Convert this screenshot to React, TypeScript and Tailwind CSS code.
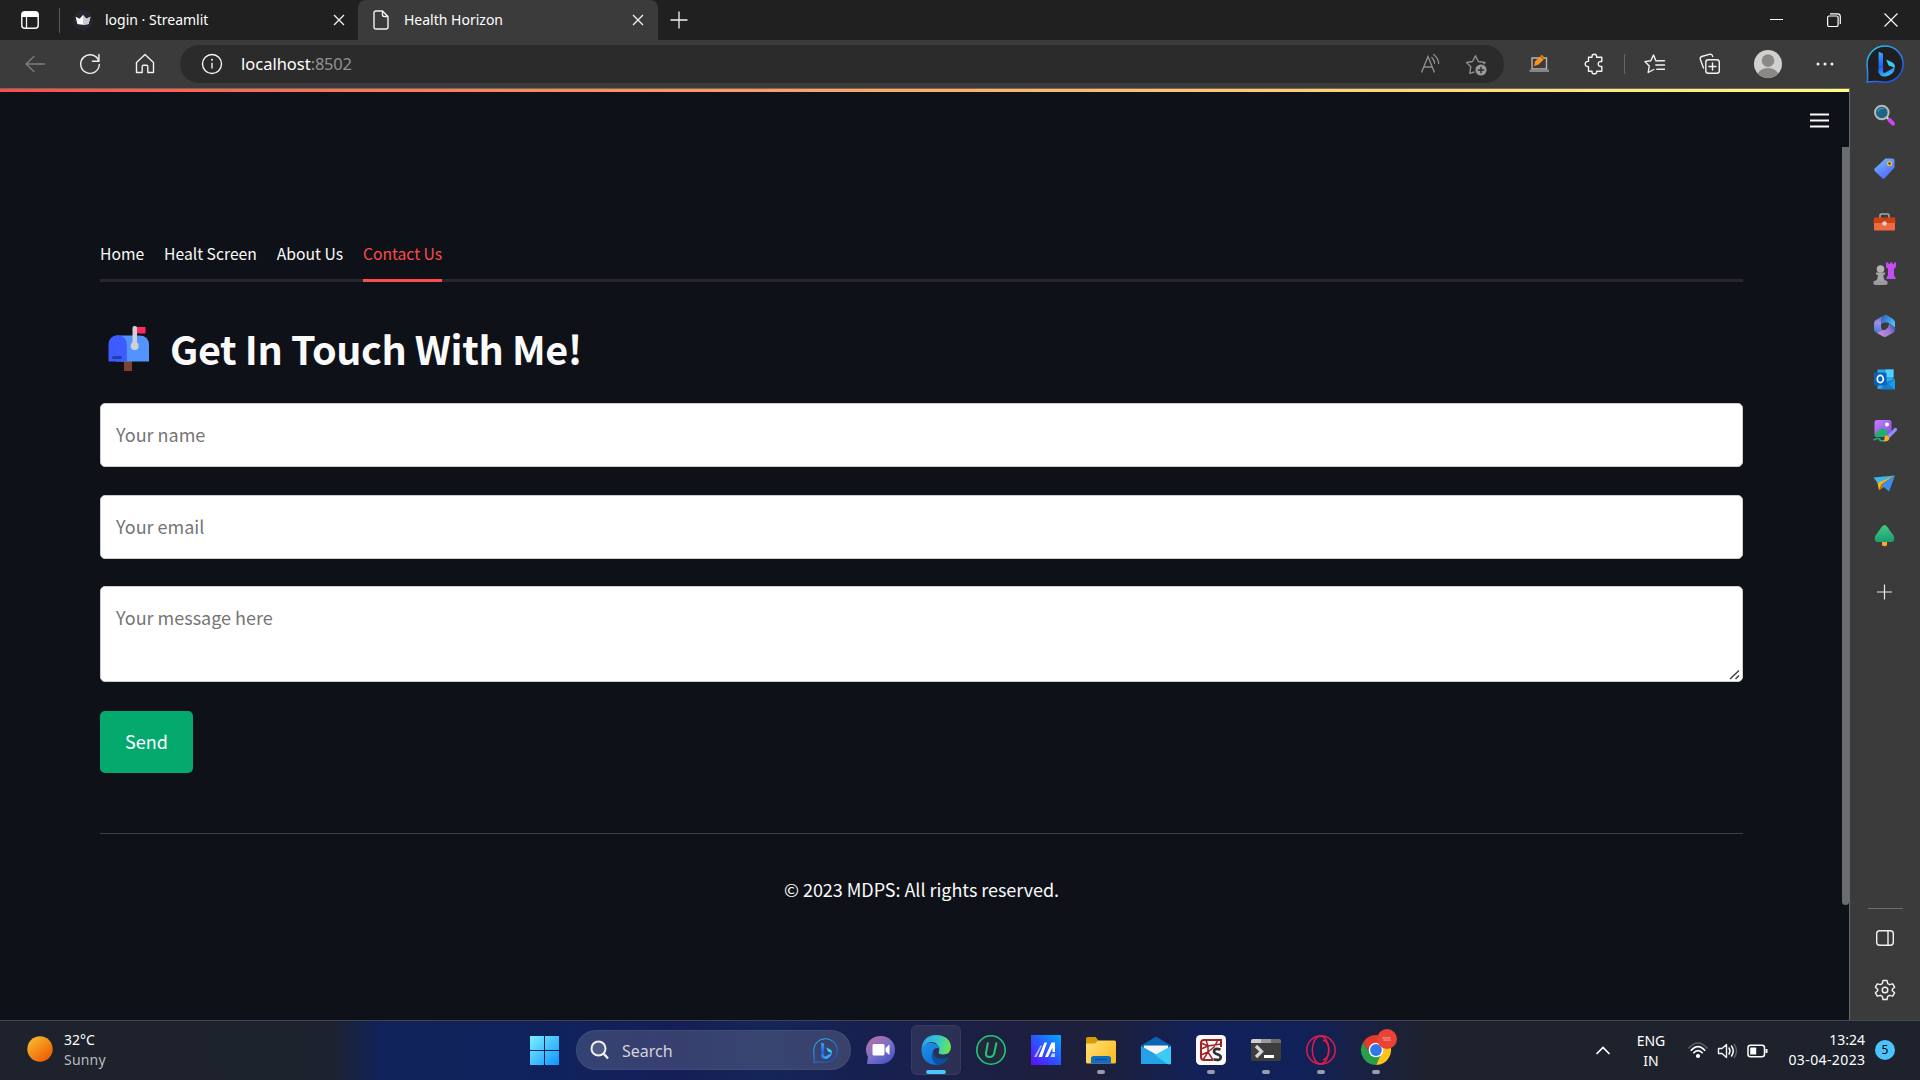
import React from "react";

type SvgProps = { w: number; h: number; className?: string; children: React.ReactNode };

/** Drawing surface whose units are page pixels. */
function Svg({ w, h, className = "", children }: SvgProps) {
  return (
    <svg width={w} height={h} viewBox={`0 0 ${w} ${h}`} fill="none" className={`block shrink-0 ${className}`}>
      {children}
    </svg>
  );
}

const line = { stroke: "#f2f2f2", strokeWidth: 1.4, strokeLinecap: "round", strokeLinejoin: "round" } as const;

function BingMark({ size, fill, id }: { size: number; fill: string; id: string }) {
  return (
    <svg width={size} height={size} viewBox="0 0 38 38" fill="none" className="block shrink-0">
      <defs>
        <linearGradient id={`${id}r`} x1="6" y1="2" x2="30" y2="36" gradientUnits="userSpaceOnUse">
          <stop stopColor="#27c4f0" />
          <stop offset="0.5" stopColor="#2a84f5" />
          <stop offset="1" stopColor="#1c50d8" />
        </linearGradient>
        <linearGradient id={`${id}b`} x1="12" y1="8" x2="22" y2="32" gradientUnits="userSpaceOnUse">
          <stop stopColor="#39a7ff" />
          <stop offset="0.55" stopColor="#1f5df2" />
          <stop offset="1" stopColor="#35c9ff" />
        </linearGradient>
      </defs>
      <path d="M19 1A18 18 0 1 1 19 37.2C14 37.2 11 35.6 1.2 37C1.8 34 2 30 1 19A18 18 0 0 1 19 1Z" fill={fill} stroke={`url(#${id}r)`} strokeWidth="1.5" />
      <path d="M12.6 6.8L17 8.6V23.6L12.6 27Z" fill={`url(#${id}b)`} />
      <path d="M12.6 25.5L18.6 28L28.4 22.2C29 26.5 26 29 22.6 30.6C19 32.6 12.6 32 12.6 25.5Z" fill={`url(#${id}b)`} />
      <path d="M12.6 24.5L17 23V28.500L12.6 28Z" fill={`url(#${id}b)`} />
      <path d="M20.2 14.6L26.6 17.6C28.6 18.8 29.4 21.4 28.6 23.2C27.4 22 25.4 21.6 23 20.8C22 20.2 21.2 17.2 20.2 14.6Z" fill="#36c8f6" />
    </svg>
  );
}

function CloseX() {
  return (
    <Svg w={12} h={12}>
      <path d="M1 1L11 11M11 1L1 11" stroke="#f2f2f2" strokeWidth="1.3" />
    </Svg>
  );
}

function TabStrip() {
  return (
    <header className="flex h-10 shrink-0 items-center bg-[#202020]">
      <div className="ml-[21px] flex w-[38px] items-center">
        <Svg w={18} h={18}>
          <rect x="0.8" y="0.8" width="16.4" height="16.4" rx="3" stroke="#f5f5f5" strokeWidth="1.5" />
          <path d="M1 3.5Q1 1 3.5 1H14.500Q17 1 17 3.500V6H1Z" fill="#fff" />
          <path d="M5.500 6V17" stroke="#f5f5f5" strokeWidth="1.3" />
        </Svg>
      </div>
      <div className="h-[25px] w-px bg-[#5a5a5a]" />
      <div className="flex w-[298px] items-center pl-[13px]">
        <Svg w={20} h={20}>
          <circle cx="10" cy="10" r="10" fill="#262730" />
          <path d="M2.600 6.800L6.600 8.800L10 5L13.400 8.800L17.400 6.800L15.600 14Q10 15.400 4.400 14Z" fill="#fff" />
          <path d="M10 5L13.400 8.800L17.400 6.800L15.600 14Q13 14.800 10 14.900Z" fill="#c9c9cf" />
        </Svg>
        <span className="ml-3 w-[228px] whitespace-nowrap text-[14px] leading-5 text-white">login · Streamlit</span>
        <CloseX />
      </div>
      <div className="flex h-10 w-[300px] items-center rounded-t-lg bg-[#3b3b3b] pl-[15px]">
        <Svg w={16} h={20}>
          <path d="M3 1H9.500L15 6.500V17Q15 19 13 19H3Q1 19 1 17V3Q1 1 3 1ZM9.500 1V5Q9.500 6.500 11 6.500H15" {...line} />
        </Svg>
        <span className="ml-[15px] w-[228px] whitespace-nowrap text-[14px] leading-5 text-white">Health Horizon</span>
        <CloseX />
      </div>
      <Svg w={18} h={18} className="ml-3">
        <path d="M9 0.500V17.500M0.500 9H17.500" stroke="#f2f2f2" strokeWidth="1.3" />
      </Svg>
      <div className="ml-auto mr-[22px] flex items-center">
        <Svg w={14} h={14} className="mr-[43px]">
          <path d="M0 6.500H13" stroke="#fff" strokeWidth="1" />
        </Svg>
        <Svg w={14} h={14} className="mr-[43px]">
          <rect x="0.600" y="3" width="10.500" height="10.500" rx="1.500" stroke="#fff" strokeWidth="1.200" />
          <path d="M3 0.800H10.500Q13.300 0.800 13.300 3.600V11" stroke="#fff" strokeWidth="1.200" />
        </Svg>
        <Svg w={14} h={14}>
          <path d="M0.500 0.500L13.500 13.500M13.500 0.500L0.500 13.500" stroke="#fff" strokeWidth="1.100" />
        </Svg>
      </div>
    </header>
  );
}

function Toolbar() {
  return (
    <div className="flex h-12 shrink-0 items-center bg-[#3b3b3b]">
      <Svg w={21} h={18} className="ml-[25px]">
        <path d="M20 9H1M9.500 1L1 9L9.500 17" stroke="#7d7d7d" strokeWidth="1.400" strokeLinejoin="round" />
      </Svg>
      <Svg w={22} h={22} className="ml-[33px]">
        <path d="M19.800 8A9.300 9.300 0 1 0 20.300 11.500" {...line} />
        <path d="M19.900 1.500V8.200H13.400" {...line} />
      </Svg>
      <Svg w={20} h={22} className="ml-[34px]">
        <path d="M1.500 9.500L10 1.500L18.500 9.500V19.500H12.800V13.500Q12.800 12.300 11.600 12.300H8.400Q7.200 12.300 7.200 13.500V19.500H1.500Z" {...line} />
      </Svg>
      <div className="ml-[25px] flex h-[38px] w-[1324px] items-center rounded-full bg-[#2b2b2b] pl-[21px]">
        <Svg w={22} h={22}>
          <circle cx="11" cy="11" r="9.500" {...line} />
          <path d="M11 9.800V15.500" stroke="#f2f2f2" strokeWidth="1.400" />
          <circle cx="11" cy="6.800" r="1" fill="#f2f2f2" />
        </Svg>
        <span className="ml-[18px] whitespace-nowrap text-[16.500px] leading-6 text-white">
          localhost<span className="tracking-[-0.25px] text-[#929292]">:8502</span>
        </span>
        <Svg w={22} h={22} className="ml-auto mr-[23px]">
          <path d="M1.500 19.500L8 3.500L14.500 19.500M4 14H12" stroke="#8e8e8e" strokeWidth="1.400" />
          <path d="M11.800 4.500Q14.500 6.800 14.600 10.300M13.500 1.500Q18.300 4.800 18.700 10.500" stroke="#8e8e8e" strokeWidth="1.300" strokeLinecap="round" />
        </Svg>
        <Svg w={23} h={23} className="mr-4">
          <path d="M9.500 19L4.800 20.300L5.800 13.700L1.500 9.500L7.500 8.500L10.500 2.800L13.300 8.500L20 9.500L18.500 11.300" stroke="#8e8e8e" strokeWidth="1.400" strokeLinejoin="round" />
          <circle cx="16" cy="17" r="5.600" fill="#9a9a9a" />
          <path d="M16 13.800V20.200M12.800 17H19.200" stroke="#2b2b2b" strokeWidth="1.400" />
        </Svg>
      </div>
      <Svg w={21} h={20} className="ml-[25px]">
        <path d="M3 4H17.500V15H3Z" stroke="#b5b5b5" strokeWidth="1.400" />
        <path d="M0.500 15.500H20V18H0.500Z" fill="#858585" />
        <path d="M5 12L6.200 7.200L12.800 0.800L16 4.200L9.300 10.700Z" fill="#f7931e" />
        <path d="M11.500 2L14.800 5.400" stroke="#3b3b3b" strokeWidth="0.800" />
      </Svg>
      <Svg w={22} h={22} className="ml-[34px]">
        <path d="M4.500 4.300H8Q7.700 1.200 10.300 1.200Q12.900 1.200 12.600 4.300H17.800V8.600Q14.200 8.200 14.200 11Q14.200 13.800 17.800 13.400V18.300H12.600Q12.900 20.800 10.300 20.800Q7.700 20.800 8 18.300H4.500V13.600Q1.200 13.800 1.200 11Q1.200 8.200 4.500 8.400Z" {...line} />
      </Svg>
      <div className="ml-[18px] h-5 w-px bg-[#666]" />
      <Svg w={22} h={22} className="ml-[19px]">
        <path d="M12.500 8H12L9.500 2L6.800 7.800L0.900 8.600L5.300 12.900L4.200 19.500L9.800 16.500M13.500 7.800H20.500M11.800 12H20.500M12.800 16.200H20.500" {...line} />
      </Svg>
      <Svg w={22} h={22} className="ml-[33px]">
        <rect x="6.800" y="6.800" width="13.500" height="13.500" rx="2.500" {...line} />
        <path d="M13.500 10V17M10 13.500H17" {...line} />
        <path d="M4.500 15L1.300 6.200Q0.800 4.300 2.700 3.500L11 1.200Q13 0.800 13.800 3.500" {...line} />
      </Svg>
      <Svg w={28} h={28} className="ml-[33px]">
        <defs>
          <clipPath id="avatar"><circle cx="14" cy="14" r="14" /></clipPath>
        </defs>
        <g clipPath="url(#avatar)">
          <rect width="28" height="28" fill="#d2d0ce" />
          <circle cx="14" cy="10.600" r="6.300" fill="#8a8886" />
          <ellipse cx="14" cy="25.500" rx="10.500" ry="7.500" fill="#8a8886" />
        </g>
      </Svg>
      <Svg w={18} h={4} className="ml-[34px]">
        <circle cx="2" cy="2" r="1.500" fill="#f2f2f2" />
        <circle cx="9" cy="2" r="1.500" fill="#f2f2f2" />
        <circle cx="16" cy="2" r="1.500" fill="#f2f2f2" />
      </Svg>
      <div className="ml-auto mr-4">
        <BingMark size={38} fill="#1f1f22" id="top" />
      </div>
    </div>
  );
}

function Mailbox() {
  return (
    <Svg w={42} h={46}>
      <path d="M16 35H24V45H16Z" fill="#7b4330" />
      <path d="M8 9.500H31Q41 9.500 41 19V35.500H8Z" fill="#5393ff" />
      <path d="M0.500 19Q0.500 9.500 9.500 9.500Q18.800 9.500 18.800 19V35.500H0.500Z" fill="#3d5bff" />
      <rect x="4" y="30" width="10" height="3" rx="1.500" fill="#1e3fb0" />
      <path d="M28 1H37.500V7.500H28Z" fill="#ff2a5b" />
      <rect x="24.500" y="0" width="4.500" height="20" rx="2" fill="#d0d1d6" />
      <circle cx="26.700" cy="20" r="4" fill="#d0d1d6" />
    </Svg>
  );
}

function ContactPage() {
  return (
    <main className="flex min-w-0 flex-1 flex-col border-r border-t border-[#6a6a6a] bg-[#0e1117] font-['Noto_Sans_CJK_SC','Noto_Sans',sans-serif] text-[#fafafa]">
      <div className="h-[3px] bg-linear-to-r from-[#ff4b4b] to-[#fffd80]" />
      <div className="flex min-h-0 flex-1">
        <div className="flex min-w-0 flex-1 flex-col pl-[100px]">
          <nav className="mt-[145px] flex h-[45px] w-[1643px] gap-[19.900px] border-b-[3px] border-[#27282d] text-[15.700px] leading-[34px]">
            <span className="h-[45px] whitespace-nowrap">Home</span>
            <span className="h-[45px] whitespace-nowrap">Healt Screen</span>
            <span className="h-[45px] whitespace-nowrap">About Us</span>
            <span className="h-[45px] whitespace-nowrap border-b-[3px] border-[#ff4b4b] text-[#ff4b4b]">Contact Us</span>
          </nav>
          <div className="mt-[41px] flex h-[54px] items-center pl-2">
            <div className="mt-[-3px]"><Mailbox /></div>
            <h1 className="ml-[20px] mt-[-5px] whitespace-nowrap text-[39.500px] font-bold leading-[54px] tracking-[-0.4px]">Get In Touch With Me!</h1>
          </div>
          <form className="mt-[26px] flex w-[1643px] flex-col text-[18px] leading-[30px] text-[#757575]">
            <div className="h-16 rounded-[5px] border border-[#ccc] bg-white px-[15px] pt-[15px]">Your name</div>
            <div className="mt-7 h-16 rounded-[5px] border border-[#ccc] bg-white px-[15px] pt-[15px]">Your email</div>
            <div className="mt-[27px] flex h-24 justify-between rounded-[5px] border border-[#ccc] bg-white pl-[15px] pt-[15px]">
              <span>Your message here</span>
              <Svg w={14} h={12} className="mr-px mt-auto">
                <path d="M3 10L12 1.500M8.500 10L12 6.500" stroke="#444" strokeWidth="1.500" />
              </Svg>
            </div>
          </form>
          <button className="mt-[29px] h-[62px] w-[93px] rounded-[5px] bg-[#04aa6d] pb-[2px] text-[18px] text-white">Send</button>
          <div className="mt-[60px] h-px w-[1643px] bg-[#3c3e43]" />
          <p className="mt-[40px] w-[1643px] text-center text-[18px] leading-[30px] tracking-[-0.04px]">© 2023 MDPS: All rights reserved.</p>
        </div>
        <div className="flex w-[39px] flex-col">
          <Svg w={20} h={15} className="mt-[21px]">
            <path d="M0 1.500H19M0 7.500H19M0 13.500H19" stroke="#fafafa" strokeWidth="2" />
          </Svg>
          <div className="ml-8 mt-[19px] h-[758px] w-[7px] rounded-b-full bg-[#6b6c70]" />
        </div>
      </div>
    </main>
  );
}

function SideRail() {
  return (
    <aside className="flex w-[70px] shrink-0 flex-col items-center bg-[#3b3b3b]">
      <Svg w={24} h={24} className="mt-4">
        <circle cx="8.800" cy="8.500" r="6.800" fill="#1d6486" stroke="#b9b9b9" strokeWidth="2" />
        <path d="M5 7.500A4.500 4.500 0 0 1 11 4.800" stroke="#3b96bd" strokeWidth="1.200" />
        <path d="M14 13.500L16 15.500" stroke="#ddd" strokeWidth="2" />
        <path d="M16.500 16L20 19.600" stroke="#cc44f4" strokeWidth="4" strokeLinecap="round" />
      </Svg>
      <Svg w={24} h={24} className="mt-[29px]">
        <defs>
          <linearGradient id="tag" x1="6" y1="3" x2="16" y2="20" gradientUnits="userSpaceOnUse">
            <stop stopColor="#6fb2ff" /><stop offset="1" stopColor="#5468ff" />
          </linearGradient>
        </defs>
        <path d="M12.500 1.500H19.500Q21.500 1.500 21.500 3.500V10.500L12 21Q10.500 22.500 9 21L1.700 14Q0.500 12.500 2 11.200Z" fill="url(#tag)" />
        <circle cx="16.500" cy="6.500" r="1.900" fill="#433" stroke="#f5c518" strokeWidth="1.400" />
      </Svg>
      <Svg w={24} h={24} className="mt-[29px]">
        <path d="M7 8V5.500Q7 4 8.500 4H14.500Q16 4 16 5.500V8" stroke="#a8a8a8" strokeWidth="1.600" />
        <rect x="1" y="11" width="21" height="9.500" rx="1" fill="#ee6a40" />
        <path d="M1 7.500H22L22.500 13H0.500Z" fill="#cf4013" />
        <circle cx="11.500" cy="13.500" r="2.300" fill="#d3d3d3" />
      </Svg>
      <Svg w={24} h={24} className="mt-[28px]">
        <circle cx="7.500" cy="7" r="3.800" fill="#b3b3b3" />
        <path d="M3 10.500H12V12.800H10.200Q10.200 17 13 19.500H2.500Q5 17 5 12.800H3Z" fill="#a6a6a6" />
        <rect x="0.500" y="18.500" width="14" height="4.500" rx="1.800" fill="#9b9b9b" />
        <path d="M13 0.500H15.500V2H17V0.500H19.500V2H21V0.500H23V5L21 7V13L23 17H13L15 13V7L13 5Z" fill="#c34df5" />
      </Svg>
      <Svg w={24} h={24} className="mt-[28px]">
        <defs>
          <linearGradient id="m1" x1="10" y1="1" x2="3" y2="18" gradientUnits="userSpaceOnUse">
            <stop stopColor="#4e6fd0" /><stop offset="0.500" stopColor="#a78be6" /><stop offset="1" stopColor="#3f7fdc" />
          </linearGradient>
          <linearGradient id="m2" x1="8" y1="3" x2="22" y2="13" gradientUnits="userSpaceOnUse">
            <stop stopColor="#2f62c8" /><stop offset="1" stopColor="#4fd0f8" />
          </linearGradient>
          <linearGradient id="m3" x1="6" y1="20" x2="22" y2="12" gradientUnits="userSpaceOnUse">
            <stop stopColor="#c58be0" /><stop offset="0.600" stopColor="#9a78d0" /><stop offset="1" stopColor="#3d4fb0" />
          </linearGradient>
        </defs>
        <path d="M11.500 1L3 6Q1 7.200 1 9.500V15.500Q1 17.500 3 18.500L4.500 19L9.500 16Q8 15 8 13V8Q8 3 11.500 1Z" fill="url(#m1)" />
        <path d="M11.500 1Q13 0.500 14.500 1.500L20 5Q22 6.500 22 8.500V13.500L15.500 9Q12.500 7 8 10V8Q8 3 11.500 1Z" fill="url(#m2)" />
        <path d="M16 9.500L22 13.500V15.500Q22 17.500 20.500 18.500L14 22.300Q11.500 23.500 9.500 22.300L4 19L9.500 16H12Q15.500 14.500 16 9.500Z" fill="url(#m3)" />
      </Svg>
      <Svg w={24} h={24} className="mt-[30px]">
        <path d="M4.500 1.500H20.500V21H4.500Z" fill="#2aa8ea" />
        <path d="M12.500 1.500H20.500V9H12.500Z" fill="#50d0ff" />
        <path d="M13 14L22 11V21.500H7.500Z" fill="#127fce" />
        <path d="M15.500 16L22 11V21.500Z" fill="#1a9be8" />
        <rect x="1" y="4.500" width="12.500" height="13" rx="1.500" fill="#0a63bb" />
        <ellipse cx="7.300" cy="11" rx="3" ry="3.600" stroke="#fff" strokeWidth="1.700" />
      </Svg>
      <Svg w={26} h={26} className="mt-[26px]">
        <defs>
          <linearGradient id="pic" x1="4" y1="3" x2="16" y2="18" gradientUnits="userSpaceOnUse">
            <stop stopColor="#c07cf8" /><stop offset="1" stopColor="#8c4fe0" />
          </linearGradient>
        </defs>
        <rect x="2.500" y="2" width="17" height="17" rx="2.500" fill="url(#pic)" />
        <circle cx="15" cy="6.500" r="2" fill="#fff" />
        <path d="M3 16L9 10.500Q10.500 9.500 12 10.500L16.500 14L12.500 19H4.500Q3 18 3 16Z" fill="#1fae6c" />
        <path d="M1.500 22Q6 19.500 8 21Q7 23.500 12 22.500" stroke="#22b573" strokeWidth="1.500" />
        <path d="M23.500 11.500L17 18" stroke="#8f8dfc" strokeWidth="3.200" strokeLinecap="round" />
        <path d="M14.500 17L17.500 20Q17 24 11 23.500Q13 21.500 12.500 19.500Q12.800 17.500 14.500 17Z" fill="#fcae26" />
      </Svg>
      <Svg w={24} h={24} className="mt-[27px]">
        <path d="M0.500 6.500L22 4.500L5 12.500Z" fill="#38b6f0" />
        <path d="M4.500 12L22 4.500L8.500 13.500L6 19.500Z" fill="#f9b416" />
        <path d="M6 19.500L9 13L11.500 15.500Z" fill="#c97a06" />
        <path d="M22 4.500L16 20.500L8.500 14Z" fill="#3b8ff2" />
      </Svg>
      <Svg w={24} h={24} className="mt-[29px]">
        <defs>
          <linearGradient id="tree" x1="12" y1="1" x2="14" y2="18" gradientUnits="userSpaceOnUse">
            <stop stopColor="#3fcb7c" /><stop offset="1" stopColor="#1c9a76" />
          </linearGradient>
        </defs>
        <path d="M9 16H14V21.500Q11.500 23 9 21.500Z" fill="#f7a922" />
        <path d="M9 2.500Q11.500 -0.500 14 2.500L20.500 11.500Q23 18 17.500 18H5.500Q0 18 2.500 11.500Z" fill="url(#tree)" />
      </Svg>
      <Svg w={16} h={16} className="mt-[36px]">
        <path d="M7.500 0.500V15.500M0 8H15" stroke="#e8e8e8" strokeWidth="1.200" />
      </Svg>
      <div className="mt-[308px] h-px w-[35px] bg-[#6e6e6e]" />
      <Svg w={20} h={18} className="mt-[20px]">
        <rect x="1.700" y="1.700" width="16.600" height="14.600" rx="3" {...line} />
        <path d="M13 2V16" {...line} />
      </Svg>
      <Svg w={22} h={22} className="mt-[32px]">
        <path d="M9 1.500H13L13.700 4.600L15.600 5.700L18.700 4.800L20.600 8.200L18.300 10.300V11.700L20.600 13.800L18.700 17.200L15.600 16.300L13.700 17.400L13 20.500H9L8.300 17.400L6.400 16.300L3.300 17.200L1.400 13.800L3.700 11.700V10.300L1.400 8.200L3.300 4.800L6.400 5.700L8.300 4.600Z" {...line} />
        <circle cx="11" cy="11" r="2.800" {...line} />
      </Svg>
    </aside>
  );
}

function TaskIcon({ children, dot }: { children: React.ReactNode; dot?: boolean }) {
  return (
    <div className="flex h-[50px] w-[55px] flex-col items-center pt-[10px]">
      {children}
      {dot && <div className="mt-[5px] h-1 w-2 rounded-full bg-[#9a9ca8]" />}
    </div>
  );
}

function Taskbar() {
  return (
    <footer className="flex h-[60px] shrink-0 items-center border-t border-[#44464f] bg-[linear-gradient(90deg,#1e222c_0,#1c222d_330px,#10235a_380px,#10225c_560px,#151e56_680px,#152558_760px,#17204f_880px,#1c1f40_1000px,#1d1f3b_1100px,#122158_1200px,#10215a_1300px,#1a2140_1370px,#1e222c_1430px,#1e222c_100%)] font-['Noto_Sans','Open_Sans',sans-serif]">
      <Svg w={26} h={26} className="ml-[27px] mt-[-3px]">
        <defs>
          <linearGradient id="sun" x1="5" y1="3" x2="21" y2="23" gradientUnits="userSpaceOnUse">
            <stop stopColor="#f7b32b" /><stop offset="1" stopColor="#ee5f04" />
          </linearGradient>
        </defs>
        <circle cx="13" cy="13" r="12.700" fill="url(#sun)" />
      </Svg>
      <div className="ml-[11px] mt-[-1px] w-[466px] text-[14px] leading-5">
        <div className="text-white">32°C</div>
        <div className="tracking-[0.2px] text-[#b9bbc2]">Sunny</div>
      </div>
      <Svg w={29} h={29}>
        <defs>
          <linearGradient id="win" x1="0" y1="0" x2="29" y2="29" gradientUnits="userSpaceOnUse">
            <stop stopColor="#7cf0ff" /><stop offset="1" stopColor="#0e94fb" />
          </linearGradient>
        </defs>
        <path d="M0 0H14V14H0ZM15 0H29V14H15ZM0 15H14V29H0ZM15 15H29V29H15Z" fill="url(#win)" />
      </Svg>
      <div className="mb-px ml-[17px] flex h-10 w-[275px] items-center rounded-full border border-white/5 bg-white/15 pl-[13px] pr-3">
        <Svg w={20} h={20}>
          <circle cx="8.500" cy="8.500" r="7" stroke="#f0f0f3" strokeWidth="2" fill="#ffffff22" />
          <path d="M13.500 13.500L18 18.500" stroke="#f0f0f3" strokeWidth="2.400" />
        </Svg>
        <span className="ml-[12px] mt-px text-[16px] text-[#d3d4dc]">Search</span>
        <div className="ml-auto"><BingMark size={25} fill="none" id="tb" /></div>
      </div>
      <div className="mb-[2px] ml-[2px] flex h-[50px]">
        <TaskIcon>
          <Svg w={30} h={30}>
            <defs>
              <linearGradient id="chat" x1="5" y1="5" x2="22" y2="28" gradientUnits="userSpaceOnUse">
                <stop stopColor="#a970a8" /><stop offset="0.500" stopColor="#7b6fc8" /><stop offset="1" stopColor="#4b54c4" />
              </linearGradient>
            </defs>
            <path d="M15 1A14 14 0 1 1 15 29H1L2 22A14 14 0 0 1 15 1Z" fill="url(#chat)" />
            <rect x="6.500" y="9" width="12" height="11.500" rx="1.500" fill="#fff" />
            <path d="M19.500 13L23.500 9.500V20L19.500 16.500Z" fill="#fff" />
          </Svg>
        </TaskIcon>
        <div className="mx-[2.500px] flex h-[50px] w-[50px] flex-col items-center rounded-md border border-white/5 bg-white/8 pt-[9px]">
          <Svg w={30} h={30}>
            <defs>
              <linearGradient id="ed1" x1="2" y1="8" x2="29" y2="14" gradientUnits="userSpaceOnUse">
                <stop stopColor="#2aa9e8" /><stop offset="0.500" stopColor="#35c7cf" /><stop offset="1" stopColor="#6be84a" />
              </linearGradient>
              <linearGradient id="ed2" x1="2" y1="10" x2="16" y2="30" gradientUnits="userSpaceOnUse">
                <stop stopColor="#1f8fe4" /><stop offset="1" stopColor="#0c6fd0" />
              </linearGradient>
            </defs>
            <path d="M0.500 14Q2 0 15 0Q29 0.500 30 12Q29.500 19.500 22 19.500Q16.500 19.500 18 16.500Q19.500 12 14.500 8Q7 4.500 0.500 14Z" fill="url(#ed1)" />
            <path d="M0.300 14.500Q4 6.500 12 8Q18.500 10 19 14Q14 11 12 16Q12 24 21 25Q25 25 27.500 22.500Q23 30 15 30Q1 29 0.300 14.500Z" fill="url(#ed2)" />
            <path d="M12 16Q8 23 15.500 29.800Q24 29.500 27.500 22.500Q13 27 12 16Z" fill="#0b4f9f" />
          </Svg>
          <div className="mt-[5px] h-1 w-5 rounded-full bg-[#4cc2ff]" />
        </div>
        <TaskIcon>
          <Svg w={30} h={30}>
            <circle cx="15" cy="15" r="14.200" stroke="#23c77c" strokeWidth="1.600" fill="#23283a" />
            <path d="M12 7.500L10 18Q9.500 22 13.500 22Q17.500 22 18.300 18L20.500 7.500" stroke="#23c77c" strokeWidth="2" />
          </Svg>
        </TaskIcon>
        <TaskIcon>
          <Svg w={30} h={30}>
            <defs>
              <linearGradient id="ma" x1="2" y1="28" x2="28" y2="2" gradientUnits="userSpaceOnUse">
                <stop stopColor="#5a12ff" /><stop offset="0.500" stopColor="#2b55ff" /><stop offset="1" stopColor="#08a0ff" />
              </linearGradient>
            </defs>
            <rect width="30" height="30" fill="url(#ma)" />
            <path d="M3 22L9.500 10.500H11L5.500 22Z" fill="#a9bcff" />
            <path d="M7.500 22L13.500 7.500H16L11 22Z" fill="#fff" />
            <path d="M14 22L20.500 7.500H24V17H21.500V12.500L17 22Z" fill="#fff" />
            <path d="M21 18.500H24V22H19.500Z" fill="#c5d3ff" />
          </Svg>
        </TaskIcon>
        <TaskIcon dot>
          <Svg w={30} h={30}>
            <defs>
              <linearGradient id="fold" x1="2" y1="6" x2="28" y2="28" gradientUnits="userSpaceOnUse">
                <stop stopColor="#ffdf76" /><stop offset="1" stopColor="#fcbc1c" />
              </linearGradient>
            </defs>
            <path d="M0 4Q0 2 2 2H9.500L12.500 5.500V10H0Z" fill="#d99a08" />
            <path d="M0 8.500H9L12.500 5.500H28.500Q30 5.500 30 7V27Q30 28.500 28.500 28.500H1.500Q0 28.500 0 27Z" fill="url(#fold)" />
            <path d="M5 28.500V23.500Q5 21 7.500 21H22.500Q25 21 25 23.500V28.500Z" fill="#0f6fc4" />
            <path d="M9 24.500H21" stroke="#0a4f96" strokeWidth="1.400" />
          </Svg>
        </TaskIcon>
        <TaskIcon>
          <Svg w={30} h={30}>
            <path d="M15 1.500L30 10.500V14H0V10.500Z" fill="#0b63b4" />
            <path d="M3 10.500H27V17L15 24L3 17Z" fill="#f2f4f8" />
            <path d="M0 11L15 19.500L30 29H0Z" fill="#28a8ea" />
            <path d="M30 11V29.200H27L13 20.500Z" fill="#3ccbf7" />
            <path d="M0 11L15 19.500L25 29H0Z" fill="#2398e2" opacity="0.500" />
          </Svg>
        </TaskIcon>
        <TaskIcon dot>
          <Svg w={30} h={30}>
            <rect width="30" height="30" rx="4.500" fill="#fafafa" />
            <path d="M17 25H8Q5 25 5 22V8Q5 5 8 5H25V12" stroke="#a42226" strokeWidth="2" />
            <path d="M5 14L12 11L25 9M5 20L12 17L17 25M10 5L12 11V17L18 12L22 5M12 17L7 25M5 8L12 11" stroke="#a42226" strokeWidth="1.500" />
            <path d="M24.500 14.500Q18 12.800 18 16.300Q18 18.300 21.200 19.200Q24.800 20.200 24.800 22.500Q24.500 26 17.500 24.300" stroke="#2d2f33" strokeWidth="2.700" />
          </Svg>
        </TaskIcon>
        <TaskIcon dot>
          <Svg w={30} h={30}>
            <rect y="4" width="30" height="22" rx="2" fill="#3d3d3d" />
            <path d="M0 8V6Q0 4 2 4H10V8Z" fill="#cfcfcf" />
            <path d="M10 4H20V8H10Z" fill="#9b9b9b" />
            <path d="M20 4H28Q30 4 30 6V8H20Z" fill="#6d6d6d" />
            <path d="M5 11L10.500 16.500L5 22" stroke="#d4d4d4" strokeWidth="3.200" />
            <rect x="13" y="20" width="10" height="3" fill="#fff" />
          </Svg>
        </TaskIcon>
        <TaskIcon dot>
          <Svg w={30} h={30}>
            <circle cx="15" cy="15" r="14.200" stroke="#e01c4c" strokeWidth="1.500" />
            <ellipse cx="14.500" cy="15" rx="8.200" ry="13.800" stroke="#e01c4c" strokeWidth="1.500" />
            <path d="M17 5Q23 7 23 15Q23 23 17 25" stroke="#e01c4c" strokeWidth="1.500" />
          </Svg>
        </TaskIcon>
        <TaskIcon dot>
          <svg width="30" height="30" viewBox="0 0 30 30" fill="none" className="block shrink-0 overflow-visible">
            <path d="M15 15L2 7.500A15 15 0 0 1 28 7.500Z" fill="#e33b2e" />
            <path d="M15 15L28 7.500A15 15 0 0 1 15 30L20 18Z" fill="#fcc41c" />
            <path d="M15 15L15 30A15 15 0 0 1 2 7.500L9 18Z" fill="#2a9f4b" />
            <path d="M9 18L2 7.500L15 8V15ZM15 8H28L20 15Z" fill="#e33b2e" />
            <path d="M20.500 18.500L15 30L9.500 19Z" fill="#2a9f4b" />
            <circle cx="15" cy="15" r="7.300" fill="#fff" />
            <circle cx="15" cy="15" r="5.900" fill="#2f78ea" />
            <circle cx="26" cy="4" r="10" fill="#ea4335" />
            <path d="M21.500 2.800H30M22.500 5.200H29.500" stroke="#f28b82" strokeWidth="1.700" strokeDasharray="2.200 0.600" />
          </svg>
        </TaskIcon>
      </div>
      <Svg w={16} h={10} className="ml-[192px]">
        <path d="M1.500 8L8 1.500L14.500 8" stroke="#fff" strokeWidth="1.700" />
      </Svg>
      <div className="ml-[15px] w-[50px] text-center text-[14px] leading-[20px] text-white">
        <div>ENG</div>
        <div>IN</div>
      </div>
      <Svg w={22} h={20} className="ml-[11px]">
        <path d="M1.500 7.500Q11 -3.500 20.500 7.500" stroke="#5b5e66" strokeWidth="1.500" />
        <path d="M3.800 9.800Q11 1.500 18.200 9.800M6.300 12.300Q11 7 15.700 12.300" stroke="#fff" strokeWidth="1.600" />
        <circle cx="11" cy="15" r="2.100" fill="#fff" />
      </Svg>
      <Svg w={22} h={20} className="ml-[8px]">
        <path d="M1.500 7.500H5L9.500 3.500V16.500L5 12.500H1.500Z" {...line} />
        <path d="M12 7Q14 10 12 13M14.500 5Q18 10 14.500 15" stroke="#fff" strokeWidth="1.500" strokeLinecap="round" />
        <path d="M17 3Q22 10 17 17" stroke="#5b5e66" strokeWidth="1.500" />
      </Svg>
      <Svg w={22} h={14} className="ml-[8px]">
        <rect x="1" y="1.200" width="16.500" height="11.600" rx="2.500" stroke="#fff" strokeWidth="1.500" />
        <rect x="3.200" y="3.400" width="6" height="7.200" rx="0.500" fill="#fff" />
        <path d="M18.500 5H20.500V9H18.500Z" fill="#fff" />
      </Svg>
      <div className="ml-auto mt-[-1px] w-[90px] text-right text-[14px] leading-5 text-white">
        <div>13:24</div>
        <div className="mr-[-0.500px] tracking-[0.4px]">03-04-2023</div>
      </div>
      <div className="mb-px ml-[10px] mr-[25px] flex size-5 items-center justify-center rounded-full bg-[#4cc2ff] text-[12px] leading-5 text-black">5</div>
    </footer>
  );
}

export default function App() {
  return (
    <div className="flex h-[1080px] w-[1920px] flex-col overflow-hidden bg-[#0e1117] font-['Noto_Sans','Open_Sans',sans-serif]">
      <TabStrip />
      <Toolbar />
      <div className="flex min-h-0 flex-1">
        <ContactPage />
        <SideRail />
      </div>
      <Taskbar />
    </div>
  );
}
